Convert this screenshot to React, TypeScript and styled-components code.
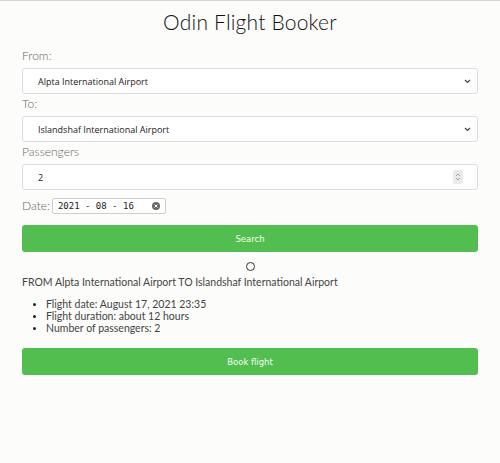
import styled, { createGlobalStyle } from "styled-components";

const Global = createGlobalStyle`
  html, body { margin: 0; padding: 0; background: #fcfcfa; }
  body { border-top: 1px solid #d6d6d4; }
`;

const Page = styled.div`
  width: 456px;
  margin: 0 auto;
  padding: 0 22px;
  font-family: "Lato", "DejaVu Sans", sans-serif;
  color: #555;
`;

const Title = styled.h1`
  margin: 8px 0 12px;
  height: 26px;
  line-height: 26px;
  text-align: center;
  font-family: "Lato", sans-serif;
  font-weight: 300;
  font-size: 21px;
  color: #111;
  letter-spacing: 0.2px;
`;

const Label = styled.div<{ $inline?: boolean }>`
  font-size: 12px;
  font-weight: 300;
  color: #666;
  height: 18px;
  line-height: 18px;
  margin-bottom: ${(p) => (p.$inline ? 0 : 3)}px;
`;

const Field = styled.div`
  box-sizing: border-box;
  height: 26px;
  border: 1px solid #dcdcdc;
  border-radius: 3px;
  background: #fff;
  display: flex;
  align-items: center;
  padding: 0 6px 0 15px;
  font-family: "Open Sans", sans-serif;
  font-size: 9px;
  color: #222;
  margin-bottom: 1px;
  & > span { flex: 1; }
`;

const Spinner = styled.div`
  width: 10px;
  height: 14px;
  margin-right: 8px;
  background: #ebebeb;
  border-radius: 2px;
  display: flex;
  align-items: center;
  justify-content: center;
`;

const DateRow = styled.div`
  display: flex;
  align-items: center;
  gap: 2px;
  margin: 7px 0 10px;
`;

const DateBox = styled.div`
  box-sizing: border-box;
  width: 114px;
  height: 16px;
  border: 1px solid #cfcfcf;
  border-radius: 2px;
  background: #fff;
  display: flex;
  align-items: center;
  padding: 0 5px;
  font-family: "DejaVu Sans Mono", monospace;
  font-size: 9px;
  color: #222;
  & > span { flex: 1; }
`;

const Button = styled.div`
  height: 27px;
  border-radius: 3px;
  background: #52be50;
  color: #f4fff2;
  font-family: "DejaVu Sans", sans-serif;
  font-size: 8.5px;
  display: flex;
  align-items: center;
  justify-content: center;
`;

const Spin = styled.div`
  width: 7px;
  height: 7px;
  border: 1.3px solid #333;
  border-radius: 50%;
  margin: 10px auto 4px;
`;

const Route = styled.div`
  font-size: 10.5px;
  color: #444;
  line-height: 14px;
`;

const List = styled.ul`
  margin: 9px 0 14px;
  padding-left: 24px;
  font-size: 10.5px;
  color: #444;
  line-height: 12px;
  li::marker { font-size: 9px; color: #222; }
`;

const Chevron = () => (
  <svg width="7" height="5" viewBox="0 0 7 5">
    <path d="M1 1l2.5 2.5L6 1" fill="none" stroke="#444" strokeWidth="1.2" />
  </svg>
);

const App = () => (
  <>
    <Global />
    <Page>
      <Title>Odin Flight Booker</Title>
      <Label>From:</Label>
      <Field>
        <span>Alpta International Airport</span>
        <Chevron />
      </Field>
      <Label>To:</Label>
      <Field>
        <span>Islandshaf International Airport</span>
        <Chevron />
      </Field>
      <Label>Passengers</Label>
      <Field>
        <span>2</span>
        <Spinner>
          <svg width="6" height="10" viewBox="0 0 6 10">
            <path d="M1 4l2-2 2 2M1 6l2 2 2-2" fill="none" stroke="#999" strokeWidth="0.9" />
          </svg>
        </Spinner>
      </Field>
      <DateRow>
        <Label $inline>Date:</Label>
        <DateBox>
          <span>2021 - 08 - 16</span>
          <svg width="8" height="8" viewBox="0 0 8 8">
            <circle cx="4" cy="4" r="4" fill="#666" />
            <path d="M2.5 2.5l3 3M5.5 2.5l-3 3" stroke="#fff" strokeWidth="1" />
          </svg>
        </DateBox>
      </DateRow>
      <Button>Search</Button>
      <Spin />
      <Route>FROM Alpta International Airport TO Islandshaf International Airport</Route>
      <List>
        <li>Flight date: August 17, 2021 23:35</li>
        <li>Flight duration: about 12 hours</li>
        <li>Number of passengers: 2</li>
      </List>
      <Button>Book flight</Button>
    </Page>
  </>
);

export default App;
